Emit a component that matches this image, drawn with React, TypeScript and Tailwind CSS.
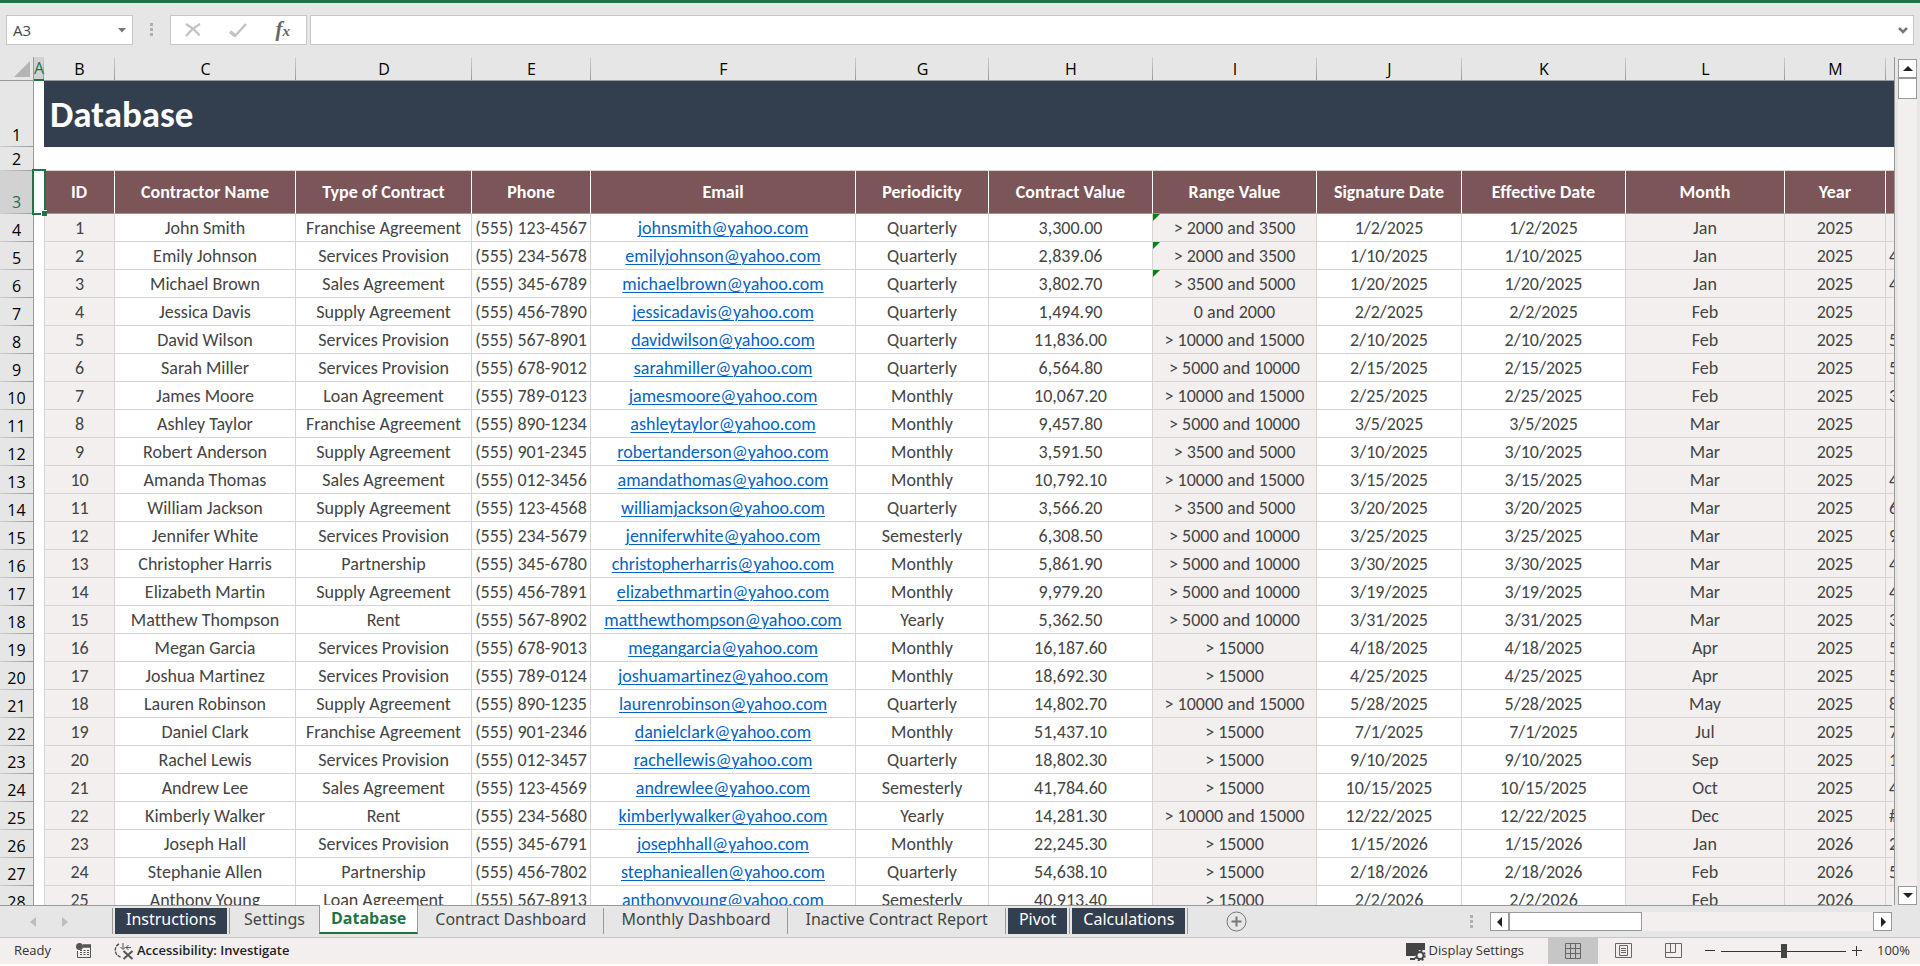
import type { ReactNode } from 'react'
import clsx from 'clsx'

const columns = [
  { letter: 'A', title: '', width: 'w-[10px]' },
  { letter: 'B', title: 'ID', width: 'w-[71px]' },
  { letter: 'C', title: 'Contractor Name', width: 'w-[181px]' },
  { letter: 'D', title: 'Type of Contract', width: 'w-[176px]' },
  { letter: 'E', title: 'Phone', width: 'w-[119px]' },
  { letter: 'F', title: 'Email', width: 'w-[265px]' },
  { letter: 'G', title: 'Periodicity', width: 'w-[133px]' },
  { letter: 'H', title: 'Contract Value', width: 'w-[164px]' },
  { letter: 'I', title: 'Range Value', width: 'w-[164px]' },
  { letter: 'J', title: 'Signature Date', width: 'w-[145px]' },
  { letter: 'K', title: 'Effective Date', width: 'w-[164px]' },
  { letter: 'L', title: 'Month', width: 'w-[159px]' },
  { letter: 'M', title: 'Year', width: 'w-[101px]' },
]

// name, type, phone, periodicity, value, range, date, month, start of the next column
const records = [
  ['John Smith', 'Franchise Agreement', '(555) 123-4567', 'Quarterly', '3,300.00', '> 2000 and 3500', '1/2/2025', 'Jan', ''],
  ['Emily Johnson', 'Services Provision', '(555) 234-5678', 'Quarterly', '2,839.06', '> 2000 and 3500', '1/10/2025', 'Jan', '4'],
  ['Michael Brown', 'Sales Agreement', '(555) 345-6789', 'Quarterly', '3,802.70', '> 3500 and 5000', '1/20/2025', 'Jan', '4'],
  ['Jessica Davis', 'Supply Agreement', '(555) 456-7890', 'Quarterly', '1,494.90', '0 and 2000', '2/2/2025', 'Feb', ''],
  ['David Wilson', 'Services Provision', '(555) 567-8901', 'Quarterly', '11,836.00', '> 10000 and 15000', '2/10/2025', 'Feb', '5'],
  ['Sarah Miller', 'Services Provision', '(555) 678-9012', 'Quarterly', '6,564.80', '> 5000 and 10000', '2/15/2025', 'Feb', '5'],
  ['James Moore', 'Loan Agreement', '(555) 789-0123', 'Monthly', '10,067.20', '> 10000 and 15000', '2/25/2025', 'Feb', '3'],
  ['Ashley Taylor', 'Franchise Agreement', '(555) 890-1234', 'Monthly', '9,457.80', '> 5000 and 10000', '3/5/2025', 'Mar', ''],
  ['Robert Anderson', 'Supply Agreement', '(555) 901-2345', 'Monthly', '3,591.50', '> 3500 and 5000', '3/10/2025', 'Mar', ''],
  ['Amanda Thomas', 'Sales Agreement', '(555) 012-3456', 'Monthly', '10,792.10', '> 10000 and 15000', '3/15/2025', 'Mar', '4'],
  ['William Jackson', 'Supply Agreement', '(555) 123-4568', 'Quarterly', '3,566.20', '> 3500 and 5000', '3/20/2025', 'Mar', '6'],
  ['Jennifer White', 'Services Provision', '(555) 234-5679', 'Semesterly', '6,308.50', '> 5000 and 10000', '3/25/2025', 'Mar', '9'],
  ['Christopher Harris', 'Partnership', '(555) 345-6780', 'Monthly', '5,861.90', '> 5000 and 10000', '3/30/2025', 'Mar', '4'],
  ['Elizabeth Martin', 'Supply Agreement', '(555) 456-7891', 'Monthly', '9,979.20', '> 5000 and 10000', '3/19/2025', 'Mar', '4'],
  ['Matthew Thompson', 'Rent', '(555) 567-8902', 'Yearly', '5,362.50', '> 5000 and 10000', '3/31/2025', 'Mar', '3'],
  ['Megan Garcia', 'Services Provision', '(555) 678-9013', 'Monthly', '16,187.60', '> 15000', '4/18/2025', 'Apr', '5'],
  ['Joshua Martinez', 'Services Provision', '(555) 789-0124', 'Monthly', '18,692.30', '> 15000', '4/25/2025', 'Apr', '5'],
  ['Lauren Robinson', 'Supply Agreement', '(555) 890-1235', 'Quarterly', '14,802.70', '> 10000 and 15000', '5/28/2025', 'May', '8'],
  ['Daniel Clark', 'Franchise Agreement', '(555) 901-2346', 'Monthly', '51,437.10', '> 15000', '7/1/2025', 'Jul', '7'],
  ['Rachel Lewis', 'Services Provision', '(555) 012-3457', 'Quarterly', '18,802.30', '> 15000', '9/10/2025', 'Sep', '1'],
  ['Andrew Lee', 'Sales Agreement', '(555) 123-4569', 'Semesterly', '41,784.60', '> 15000', '10/15/2025', 'Oct', '4'],
  ['Kimberly Walker', 'Rent', '(555) 234-5680', 'Yearly', '14,281.30', '> 10000 and 15000', '12/22/2025', 'Dec', '#'],
  ['Joseph Hall', 'Services Provision', '(555) 345-6791', 'Monthly', '22,245.30', '> 15000', '1/15/2026', 'Jan', '2'],
  ['Stephanie Allen', 'Partnership', '(555) 456-7802', 'Quarterly', '54,638.10', '> 15000', '2/18/2026', 'Feb', '5'],
  ['Anthony Young', 'Loan Agreement', '(555) 567-8913', 'Semesterly', '40,913.40', '> 15000', '2/2/2026', 'Feb', ''],
]

const emailOf = (name: string) => name.replace(' ', '').toLowerCase() + '@yahoo.com'

function FormulaBar() {
  return (
    <div className="flex h-[54px] shrink-0 items-center gap-[3px] px-[6px]">
      <div className="flex h-[30px] w-[127px] items-center border border-[#c6c6c6] bg-white px-[6px]">
        <input aria-label="Name box" defaultValue="A3" className="w-0 flex-1 bg-transparent text-[15px] text-[#444] outline-none" />
        <button aria-label="Name box list">
          <svg width="8" height="5" viewBox="0 0 8 5" fill="#777"><path d="M0 0h8L4 4.5z" /></svg>
        </button>
      </div>
      <svg width="31" height="14" viewBox="0 0 31 14" fill="#b0b0b0">
        <path d="M14 0h3v3h-3zM14 5h3v3h-3zM14 10h3v3h-3z" />
      </svg>
      <div className="flex h-[30px] w-[137px] items-center justify-between border border-[#c6c6c6] bg-white pr-[16px] pl-[14px]">
        <button aria-label="Cancel">
          <svg width="16" height="14" viewBox="0 0 16 14" fill="none" stroke="#c3c3c3" strokeWidth="2.2">
            <path d="M1 1C6 4 11 8 14.500 12.500M15 1C10 4 5 8 1 13" />
          </svg>
        </button>
        <button aria-label="Enter">
          <svg width="18" height="15" viewBox="0 0 18 15" fill="none" stroke="#c3c3c3">
            <path d="M1 8.500l5.500 4.500" strokeWidth="3.500" />
            <path d="M5.500 13.500L17 1" strokeWidth="2.500" />
          </svg>
        </button>
        <button aria-label="Insert function" className="font-['Liberation_Serif',serif] text-[21px] leading-5 font-bold text-[#666] italic">
          f<span className="text-[15px]">x</span>
        </button>
      </div>
      <div className="flex h-[30px] flex-1 items-center border border-[#c6c6c6] bg-white pr-[5px]">
        <input aria-label="Formula" className="h-full flex-1 px-1 text-sm outline-none" />
        <button aria-label="Expand formula bar">
          <svg width="10" height="7" viewBox="0 0 10 7" fill="none" stroke="#777" strokeWidth="2.500"><path d="M1 1l4 4 4-4" /></svg>
        </button>
      </div>
    </div>
  )
}

function RowHead({ n, active }: { n: number; active?: boolean }) {
  return (
    <th
      scope="row"
      className={clsx(
        "border-r border-[#999] bg-[linear-gradient(to_right,#d0d0d0,#999)] bg-[length:100%_1px] bg-bottom bg-no-repeat p-0 pb-px align-bottom font-['Open_Sans',sans-serif] text-[16px] leading-[22px] font-normal",
        active ? 'bg-[#d2d2d2] text-[#217346]' : 'bg-[#e6e6e6] text-black'
      )}
    >
      {n}
    </th>
  )
}

function Cell({ tinted, first, children }: { tinted?: boolean; first?: boolean; children?: ReactNode }) {
  return (
    <td
      className={clsx(
        'relative border-r border-b border-[#d4d4d4] p-0 pt-px text-center whitespace-nowrap',
        tinted && 'bg-[#f3efee]',
        first && 'border-l'
      )}
    >
      {children}
    </td>
  )
}

function Sheet() {
  return (
    <div className="min-w-0 flex-1 overflow-hidden border-r border-[#999]">
      <table className="w-full table-fixed border-separate border-spacing-0 bg-white font-['Carlito','Lato',sans-serif] text-[18px] leading-[26px] text-[#444] [font-variant-ligatures:none]">
        <colgroup>
          <col className="w-[34px]" />
          {columns.map((c) => (
            <col key={c.letter} className={c.width} />
          ))}
          <col />
        </colgroup>
        <thead className="font-['Open_Sans',sans-serif] text-[16px] text-black">
          <tr className="h-6 bg-[#e6e6e6]">
            <td className="border-r border-b border-[#999] p-0">
              <svg className="ml-auto mr-[3px]" width="16" height="16" viewBox="0 0 16 16" fill="#b4b4b4"><path d="M16 0v16H0z" /></svg>
            </td>
            {columns.map((c) => (
              <th
                key={c.letter}
                scope="col"
                className={clsx(
                  'bg-[linear-gradient(to_bottom,#d0d0d0,#999)] bg-[length:1px_100%] bg-right bg-no-repeat p-0 leading-[22px] font-normal',
                  c.letter === 'A' ? 'border-b-2 border-[#217346] bg-[#d2d2d2] text-[#217346]' : 'border-b border-[#999]'
                )}
              >
                {c.letter}
              </th>
            ))}
            <td className="border-b border-[#999]" />
          </tr>
        </thead>
        <tbody>
          <tr className="h-[66px]">
            <RowHead n={1} />
            <td />
            <td colSpan={13} className="bg-[#333f4f] p-0 pt-[2px] pl-[6px] text-left text-[37px] leading-10 font-bold text-white">Database</td>
          </tr>
          <tr className="h-6">
            <RowHead n={2} />
            <td />
            <td colSpan={13} className="border-b border-[#d4d4d4] p-0" />
          </tr>
          <tr className="h-[43px] text-white">
            <RowHead n={3} active />
            <td className="relative p-0">
              <span className="absolute -top-[2px] -right-[2px] -bottom-px -left-[2px] z-10 border-2 border-[#217346]" />
              <span className="absolute -right-[3px] -bottom-[2px] z-10 size-[6px] border-t border-l border-white bg-[#217346]" />
            </td>
            {columns.slice(1).map((c) => (
              <th key={c.letter} scope="col" className="border-r border-b border-r-white border-b-[#999] bg-[#7b5558] p-0 font-bold">
                {c.title}
              </th>
            ))}
            <td className="border-b border-[#999] bg-[#7b5558]" />
          </tr>
          {records.map(([name, type, phone, period, value, range, date, month, next], i) => (
            <tr key={name} className="h-7">
              <RowHead n={i + 4} />
              <td className="p-0" />
              <Cell tinted first>{i + 1}</Cell>
              <Cell>{name}</Cell>
              <Cell>{type}</Cell>
              <Cell>{phone}</Cell>
              <Cell>
                <a href={'mailto:' + emailOf(name)} className="text-[#0563c1] underline decoration-1 underline-offset-2">{emailOf(name)}</a>
              </Cell>
              <Cell>{period}</Cell>
              <Cell>{value}</Cell>
              <Cell tinted>
                {i < 3 && (
                  <svg className="absolute top-0 left-0" width="7" height="7" viewBox="0 0 7 7" fill="#0a8010"><path d="M0 0h7L0 7z" /></svg>
                )}
                {range}
              </Cell>
              <Cell>{date}</Cell>
              <Cell>{date}</Cell>
              <Cell tinted>{month}</Cell>
              <Cell tinted>{date.slice(-4)}</Cell>
              <td className="overflow-hidden border-b border-[#d4d4d4] bg-[#f3efee] p-0 pt-px pl-[3px]">{next}</td>
            </tr>
          ))}
        </tbody>
      </table>
    </div>
  )
}

const arrows = {
  up: 'M0 7l5-5 5 5z',
  down: 'M0 2h10L5 7z',
  left: 'M7 0v10L2 5z',
  right: 'M3 0l5 5-5 5z',
}

function ScrollButton({ dir }: { dir: keyof typeof arrows }) {
  return (
    <button aria-label={'Scroll ' + dir} className="flex size-[19px] shrink-0 items-center justify-center border border-[#999] bg-white">
      <svg width="10" height="10" viewBox="0 0 10 10" fill="#222"><path d={arrows[dir]} /></svg>
    </button>
  )
}

function Tab({ children, dark }: { children: ReactNode; dark?: boolean }) {
  return (
    <div className="flex border-r border-[#999] px-[2px]">
      <button className={clsx('pb-1 leading-[22px]', dark ? 'bg-[#333f4f] px-[11px] text-white' : 'px-[15px] text-[#444]')}>{children}</button>
    </div>
  )
}

function TabBar() {
  return (
    <div className="flex h-[33px] shrink-0 items-start border-b border-[#c6c6c6] pr-[28px] font-['Noto_Sans',sans-serif] text-[16px]">
      <div className="flex h-full w-[112px] shrink-0 items-center gap-[26px] border-t border-[#999] pl-[30px]">
        <button aria-label="Previous sheet">
          <svg width="6" height="10" viewBox="0 0 6 10" fill="#bdbdbd"><path d="M6 0v10L0 5z" /></svg>
        </button>
        <button aria-label="Next sheet">
          <svg width="6" height="10" viewBox="0 0 6 10" fill="#bdbdbd"><path d="M0 0l6 5-6 5z" /></svg>
        </button>
      </div>
      <div className="flex h-full items-start border-t border-[#999] pt-[2px]">
        <div className="flex border-l border-[#999]">
          <Tab dark>Instructions</Tab>
        </div>
        <button className="px-[14px] pb-1 leading-[22px] text-[#444]">Settings</button>
      </div>
      <button className="h-[29px] border-x border-b-2 border-x-[#999] border-b-[#217346] bg-white px-[11px] pb-[2px] font-['Open_Sans',sans-serif] leading-6 font-bold text-[#217346]">Database</button>
      <div className="flex h-full flex-1 items-start border-t border-[#999] pt-[2px]">
        <Tab>Contract Dashboard</Tab>
        <Tab>Monthly Dashboard</Tab>
        <Tab>Inactive Contract Report</Tab>
        <Tab dark>Pivot</Tab>
        <Tab dark>Calculations</Tab>
        <button aria-label="New sheet" className="mt-[3px] ml-[38px]">
          <svg width="21" height="21" viewBox="0 0 21 21" fill="none" stroke="#777">
            <circle cx="10.500" cy="10.500" r="9.500" />
            <path strokeWidth="2" d="M10.500 5.500v10M5.500 10.500h10" />
          </svg>
        </button>
        <svg className="mt-[7px] mr-[17px] ml-auto" width="3" height="13" viewBox="0 0 3 13" fill="#b0b0b0">
          <path d="M0 0h3v3H0zM0 5h3v3H0zM0 10h3v3H0z" />
        </svg>
        <div className="mt-[4px] flex w-[402px] shrink-0 bg-[#f3efee]">
          <ScrollButton dir="left" />
          <div className="h-[19px] w-[133px] border border-[#999] bg-white" />
          <div className="flex-1" />
          <ScrollButton dir="right" />
        </div>
      </div>
    </div>
  )
}

function StatusBar() {
  return (
    <div className="flex h-[26px] shrink-0 items-center bg-[#f3efee] font-['Open_Sans',sans-serif] text-[13px] text-[#333]">
      <span className="pl-[14px]">Ready</span>
      <button aria-label="Record macro" className="ml-[25px]">
        <svg width="16" height="16" viewBox="0 0 16 16" fill="none" stroke="#555">
          <path d="M1.500 8v6.500h13V4" />
          <path d="M7 3h8" strokeWidth="3.500" />
          <path d="M4 7.500h9M4 9.500h9M4 11.500h9" strokeDasharray="2 1.500" />
          <circle cx="3.500" cy="3.500" r="3.500" fill="#555" stroke="none" />
        </svg>
      </button>
      <button className="ml-[22px] flex items-center gap-[3px] font-semibold text-[#222]">
        <svg width="20" height="18" viewBox="0 0 20 18" fill="none" stroke="#555">
          <path d="M5 2C1 4 0 9 3 13l4 2.500" strokeDasharray="3.500 1" strokeWidth="1.400" />
          <path d="M9 1v6M6.500 5L9 7.500 11.500 5M17 5.500h-5M14.500 3l-2.500 2.500 2.500 2.500" />
          <path d="M9.500 9l9 8M18.500 9l-9 8" strokeWidth="2" />
        </svg>
        Accessibility: Investigate
      </button>
      <button className="mr-6 ml-auto flex items-center gap-[3px]">
        <svg width="20" height="19" viewBox="0 0 20 19" fill="none">
          <path d="M0 1h19v7l-6 0-4 6H0zM4 16h5v2H4z" fill="#444" />
          <circle cx="14" cy="13.500" r="3.500" stroke="#444" strokeWidth="2" />
          <circle cx="14" cy="13.500" r="5" stroke="#444" strokeWidth="1.500" strokeDasharray="2 1.900" />
        </svg>
        Display Settings
      </button>
      <button aria-label="Normal" className="flex h-full w-[50px] items-center justify-center bg-[#c6c6c6]">
        <svg width="16" height="16" viewBox="0 0 16 16" fill="none" stroke="#666"><path d="M.5.5h15v15H.5zM5.500.5v15M10.500.5v15M.5 5.500h15M.5 10.500h15" /></svg>
      </button>
      <button aria-label="Page layout" className="flex h-full w-[50px] items-center justify-center">
        <svg width="17" height="16" viewBox="0 0 17 16" fill="none" stroke="#666"><path d="M.5.5h16v14H.5zM4.500 2.500h8v10h-8zM6 5.500h5M6 7.500h5M6 9.500h5" /></svg>
      </button>
      <button aria-label="Page break preview" className="flex h-full w-[50px] items-center justify-center">
        <svg width="17" height="16" viewBox="0 0 17 16" fill="none" stroke="#666"><path d="M.5.5h16v14H.5zM.5 9.500h10v-9M5.500.5v9" /></svg>
      </button>
      <button aria-label="Zoom out" className="ml-[7px]">
        <svg width="10" height="10" viewBox="0 0 10 10" stroke="#333"><path d="M0 4.500h10" /></svg>
      </button>
      <input
        type="range"
        aria-label="Zoom"
        className="mx-[6px] h-[14px] w-[125px] appearance-none bg-[linear-gradient(#333,#333)] bg-[length:100%_1px] bg-center bg-no-repeat [&::-webkit-slider-thumb]:h-[14px] [&::-webkit-slider-thumb]:w-[6px] [&::-webkit-slider-thumb]:appearance-none [&::-webkit-slider-thumb]:bg-[#444]"
      />
      <button aria-label="Zoom in">
        <svg width="10" height="10" viewBox="0 0 10 10" stroke="#333"><path d="M0 4.500h10M4.500 0v10" /></svg>
      </button>
      <span className="w-[58px] pr-[10px] text-right">100%</span>
    </div>
  )
}

export default function App() {
  return (
    <div className="flex h-screen flex-col overflow-hidden border-b-2 border-white bg-[#e6e6e6] font-['Open_Sans',sans-serif]">
      <div className="h-[3px] shrink-0 bg-[#217346]" />
      <FormulaBar />
      <div className="flex min-h-0 flex-1">
        <Sheet />
        <div className="ml-[3px] mr-[3px] mt-[2px] flex flex-col bg-[#f3efee]">
          <ScrollButton dir="up" />
          <div className="h-[21px] border border-[#999] bg-white" />
          <div className="flex-1" />
          <ScrollButton dir="down" />
        </div>
      </div>
      <TabBar />
      <StatusBar />
    </div>
  )
}
